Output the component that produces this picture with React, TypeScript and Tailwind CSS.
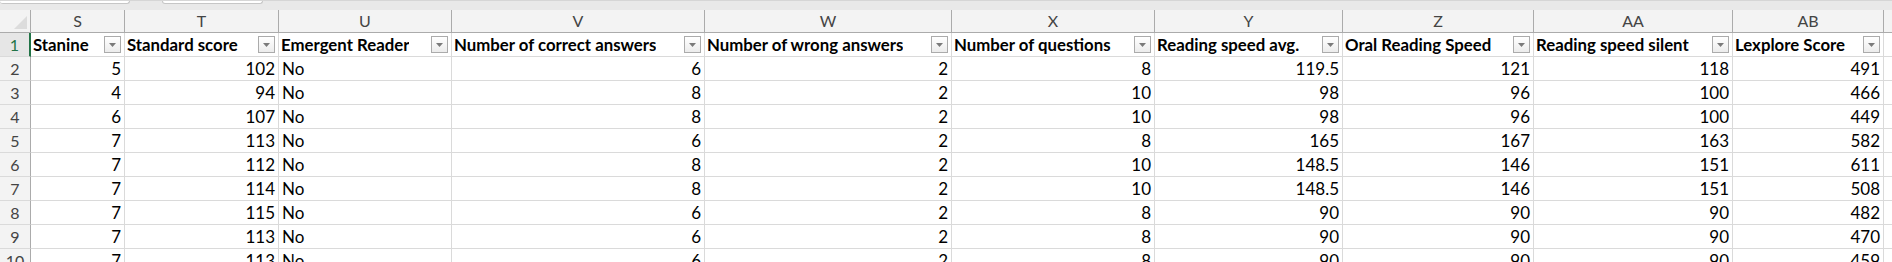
const COLS = [
  { letter: "S", title: "Stanine", w: 94 },
  { letter: "T", title: "Standard score", w: 154 },
  { letter: "U", title: "Emergent Reader", w: 173 },
  { letter: "V", title: "Number of correct answers", w: 253 },
  { letter: "W", title: "Number of wrong answers", w: 247 },
  { letter: "X", title: "Number of questions", w: 203 },
  { letter: "Y", title: "Reading speed avg.", w: 188 },
  { letter: "Z", title: "Oral Reading Speed", w: 191 },
  { letter: "AA", title: "Reading speed silent", w: 199 },
  { letter: "AB", title: "Lexplore Score", w: 151 },
];

const ROWS: (string | number)[][] = [
  [5, 102, "No", 6, 2, 8, 119.5, 121, 118, 491],
  [4, 94, "No", 8, 2, 10, 98, 96, 100, 466],
  [6, 107, "No", 8, 2, 10, 98, 96, 100, 449],
  [7, 113, "No", 6, 2, 8, 165, 167, 163, 582],
  [7, 112, "No", 8, 2, 10, 148.5, 146, 151, 611],
  [7, 114, "No", 8, 2, 10, 148.5, 146, 151, 508],
  [7, 115, "No", 6, 2, 8, 90, 90, 90, 482],
  [7, 113, "No", 6, 2, 8, 90, 90, 90, 470],
  [7, 113, "No", 6, 2, 8, 90, 90, 90, 459],
];

const gridCols = `31px ${COLS.map((c) => c.w + "px").join(" ")} 8px`;

function FilterButton() {
  return (
    <div className="flex h-[17px] w-[17px] shrink-0 items-center justify-center border border-[#ababab] bg-gradient-to-b from-white to-[#ececec]">
      <svg width="7" height="4" viewBox="0 0 7 4">
        <path d="M0 0h7L3.5 4z" fill="#7a7a7a" />
      </svg>
    </div>
  );
}

export default function App() {
  return (
    <div
      className="h-[262px] w-[1892px] overflow-hidden bg-white text-[17px] text-black"
      style={{ fontFamily: "Lato, 'Noto Sans', sans-serif" }}
    >
      {/* formula bar edge */}
      <div className="flex h-[10px] border-t border-[#d6d6d6] bg-[#e9e9e9]">
        <div className="h-[3px] w-[130px] rounded-b-sm border-b border-r border-[#c6c6c6] bg-white" />
        <div className="ml-[32px] h-[3px] w-[101px] rounded-b-sm border-b border-x border-[#c6c6c6] bg-white" />
      </div>

      <div className="grid" style={{ gridTemplateColumns: gridCols }}>
        {/* column letters */}
        <div className="flex h-[23px] items-end justify-end border-b border-r border-[#ababab] bg-[#f3f3f3] pb-[3px] pr-[3px]">
          <svg width="13" height="13" viewBox="0 0 13 13">
            <path d="M13 0v13H0z" fill="#dcdcdc" />
          </svg>
        </div>
        {COLS.map((c) => (
          <div
            key={c.letter}
            className="flex h-[23px] items-center justify-center border-b border-r border-[#ababab] bg-[#f3f3f3] text-[16px] text-[#444]"
          >
            {c.letter}
          </div>
        ))}
        <div className="h-[23px] border-b border-[#ababab] bg-[#f3f3f3]" />

        {/* header row */}
        <div className="flex h-[24px] items-center justify-center border-b border-r-2 border-b-[#dadada] border-r-[#217346] bg-[#e6e6e6] text-[16px] text-[#217346]">
          1
        </div>
        {COLS.map((c) => (
          <div
            key={c.title}
            className="flex h-[24px] items-center justify-between border-b border-r border-[#dadada] pl-[2px] pr-[3px] text-[16.8px] font-bold"
          >
            <span className="truncate">{c.title}</span>
            <FilterButton />
          </div>
        ))}
        <div className="h-[24px] border-b border-[#dadada]" />

        {/* data rows */}
        {ROWS.map((row, i) => (
          <div key={i} className="contents">
            <div className="flex h-[24px] items-center justify-center border-b border-r border-b-[#dadada] border-r-[#ababab] bg-[#f3f3f3] text-[16px] text-[#444]">
              {i + 2}
            </div>
            {row.map((v, j) => (
              <div
                key={j}
                className={
                  typeof v === "number"
                    ? "flex h-[24px] items-center justify-end border-b border-r border-[#dadada] pr-[3px]"
                    : "flex h-[24px] items-center border-b border-r border-[#dadada] pl-[3px]"
                }
              >
                {v}
              </div>
            ))}
            <div className="h-[24px] border-b border-[#dadada]" />
          </div>
        ))}
      </div>
    </div>
  );
}
